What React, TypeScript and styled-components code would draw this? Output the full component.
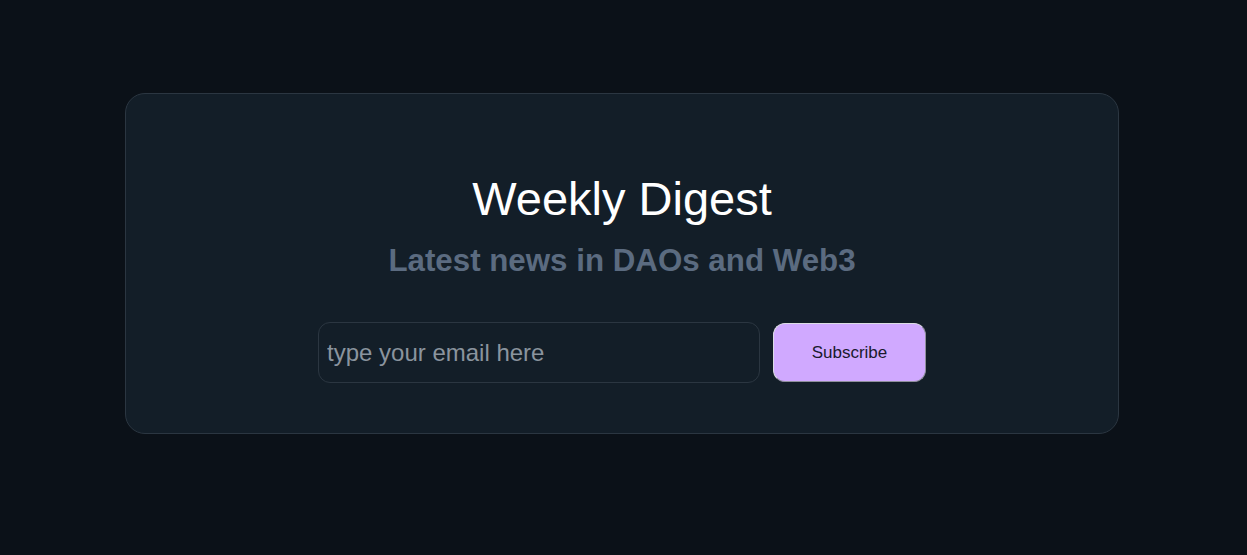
import React from "react";
import styled, { createGlobalStyle } from "styled-components";

const Global = createGlobalStyle`
  html, body { margin: 0; padding: 0; background: #0b1118; }
  body { font-family: "Liberation Sans", Arial, sans-serif; }
`;

const Page = styled.div`
  min-height: 555px;
  background: #0b1118;
  padding: 93px 0 0 125px;
  box-sizing: border-box;
`;

const Card = styled.section`
  width: 994px;
  height: 341px;
  box-sizing: border-box;
  background: #131e28;
  border: 1px solid #2b3641;
  border-radius: 20px;
  padding-top: 77px;
  display: flex;
  flex-direction: column;
  align-items: center;
`;

const Title = styled.h1`
  margin: 0;
  font-size: 47px;
  font-weight: 400;
  color: #ffffff;
  line-height: 55px;
`;

const Subtitle = styled.h2`
  margin: 17px 0 0;
  font-size: 31.3px;
  font-weight: 700;
  color: #5b6b80;
  line-height: 35px;
`;

const Form = styled.form`
  margin-top: 44px;
  display: flex;
  align-items: center;
  gap: 13px;
`;

const EmailInput = styled.input`
  width: 442px;
  height: 61px;
  box-sizing: border-box;
  background: transparent;
  border: 1px solid #2b3641;
  border-radius: 12px;
  padding: 0 8px;
  font-family: "Liberation Sans", Arial, sans-serif;
  font-size: 24px;
  color: #e6e6e6;
  outline: none;
  &::placeholder { color: #8a949e; }
`;

const SubscribeButton = styled.button`
  width: 153px;
  height: 59px;
  box-sizing: border-box;
  background: #d0a9ff;
  border: 1px solid;
  border-color: #dcdce4 #8f8f9c #8f8f9c #dcdce4;
  border-radius: 12px;
  padding: 0;
  font-family: "Liberation Sans", Arial, sans-serif;
  font-size: 17px;
  color: #1a1a2e;
  cursor: pointer;
`;

export default function App() {
  return (
    <>
      <Global />
      <Page>
        <Card>
          <Title>Weekly Digest</Title>
          <Subtitle>Latest news in DAOs and Web3</Subtitle>
          <Form onSubmit={(e) => e.preventDefault()}>
            <EmailInput type="email" placeholder="type your email here" />
            <SubscribeButton type="submit">Subscribe</SubscribeButton>
          </Form>
        </Card>
      </Page>
    </>
  );
}
